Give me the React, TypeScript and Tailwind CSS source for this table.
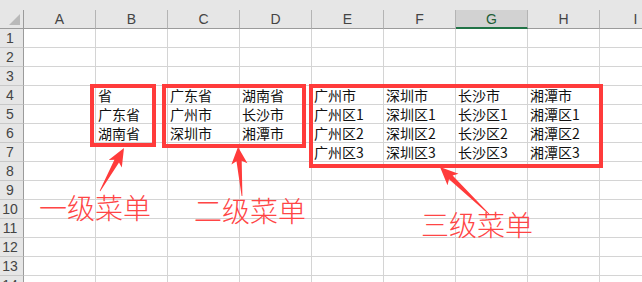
import type { ReactNode } from 'react';

const COLS = ['A', 'B', 'C', 'D', 'E', 'F', 'G', 'H', 'I'];
const ROWS = Array.from({ length: 14 }, (_, i) => i + 1);

// sheet contents, keyed by cell address
const CELLS: Record<string, string> = {
  B4: '省',
  B5: '广东省',
  B6: '湖南省',
  C4: '广东省',
  C5: '广州市',
  C6: '深圳市',
  D4: '湖南省',
  D5: '长沙市',
  D6: '湘潭市',
  E4: '广州市',
  E5: '广州区1',
  E6: '广州区2',
  E7: '广州区3',
  F4: '深圳市',
  F5: '深圳区1',
  F6: '深圳区2',
  F7: '深圳区3',
  G4: '长沙市',
  G5: '长沙区1',
  G6: '长沙区2',
  G7: '长沙区3',
  H4: '湘潭市',
  H5: '湘潭区1',
  H6: '湘潭区2',
  H7: '湘潭区3',
};

type Pt = [number, number];

// skinny callout arrow: triangular head at `tip`, shaft tapering to a point at `tail`
function arrowPoints(tip: Pt, tail: Pt, headLen = 18, headHalf = 7, neckHalf = 2.6) {
  const dx = tail[0] - tip[0];
  const dy = tail[1] - tip[1];
  const len = Math.hypot(dx, dy);
  const ux = dx / len;
  const uy = dy / len;
  const px = -uy;
  const py = ux;
  const at = (d: number, side: number): Pt => [tip[0] + ux * d + px * side, tip[1] + uy * d + py * side];
  const pts: Pt[] = [
    tip,
    at(headLen, headHalf),
    at(headLen - 3, neckHalf),
    at(len, 0.4),
    at(len, -0.4),
    at(headLen - 3, -neckHalf),
    at(headLen, -headHalf),
  ];
  return pts.map((p) => `${p[0].toFixed(1)},${p[1].toFixed(1)}`).join(' ');
}

function HeaderCell({ children, active }: { children: ReactNode; active?: boolean }) {
  return (
    <div
      className={`w-[72px] h-[19px] shrink-0 flex items-center justify-center border-r border-[#b4b4b4] ${
        active
          ? 'bg-[#d2d2d2] border-b-2 border-b-[#217346] text-[#1e5e36]'
          : 'border-b border-b-[#9b9b9b] text-[#444444]'
      }`}
    >
      {children}
    </div>
  );
}

function Label({ children, className }: { children: ReactNode; className: string }) {
  return (
    <div className={`absolute text-[28px] leading-none font-light text-[#ff4545] whitespace-nowrap ${className}`}>
      {children}
    </div>
  );
}

export default function App() {
  return (
    <div className="relative w-[642px] h-[282px] overflow-hidden bg-white text-black font-['Noto_Sans_CJK_SC',sans-serif]">
      {/* column headers */}
      <div className="flex items-end h-[29px] bg-[#e6e6e6] font-['Liberation_Sans','Noto_Sans_CJK_SC',sans-serif] text-[14px] leading-none">
        <div className="relative w-[24px] h-[19px] shrink-0 border-r border-b border-[#9b9b9b]">
          <svg className="absolute left-0 top-0" width="24" height="19" viewBox="0 0 24 19">
            <polygon points="20,4 20,15 9,15" fill="#b9b9b9" />
          </svg>
        </div>
        {COLS.map((c) => (
          <HeaderCell key={c} active={c === 'G'}>
            {c}
          </HeaderCell>
        ))}
      </div>

      {/* rows */}
      {ROWS.map((r) => (
        <div key={r} className="flex h-[19px]">
          <div className="w-[24px] shrink-0 bg-[#e6e6e6] border-r border-r-[#9b9b9b] border-b border-b-[#c8c8c8] flex items-center justify-center pr-[3px] font-['Liberation_Sans',sans-serif] text-[14px] leading-none text-[#444444]">
            {r}
          </div>
          {COLS.map((c) => (
            <div
              key={c}
              className="w-[72px] shrink-0 border-r border-b border-[#d4d4d4] pl-[2px] text-[14px] leading-[18px] text-[#111111] whitespace-nowrap overflow-hidden"
            >
              {CELLS[`${c}${r}`] ?? ''}
            </div>
          ))}
        </div>
      ))}

      {/* highlight frames */}
      <div className="absolute left-[90px] top-[84px] w-[66px] h-[63px] border-[4px] border-[#ff3b3b]" />
      <div className="absolute left-[162px] top-[84px] w-[144px] h-[64px] border-[4px] border-[#ff3b3b]" />
      <div className="absolute left-[309px] top-[84px] w-[294px] h-[84px] border-[4px] border-[#ff3b3b]" />

      {/* callout arrows */}
      <svg className="absolute inset-0 pointer-events-none" width="642" height="282" viewBox="0 0 642 282">
        <polygon points={arrowPoints([124, 148], [100, 191], 18, 7.5)} fill="#ff3b3b" />
        <polygon points={arrowPoints([238, 147], [242, 196], 17, 8)} fill="#ff3b3b" />
        <polygon points={arrowPoints([440, 167], [489, 214], 18, 8)} fill="#ff3b3b" />
      </svg>

      {/* labels */}
      <Label className="left-[39px] top-[193px]">一级菜单</Label>
      <Label className="left-[194px] top-[196px]">二级菜单</Label>
      <Label className="left-[421px] top-[210px]">三级菜单</Label>
    </div>
  );
}
